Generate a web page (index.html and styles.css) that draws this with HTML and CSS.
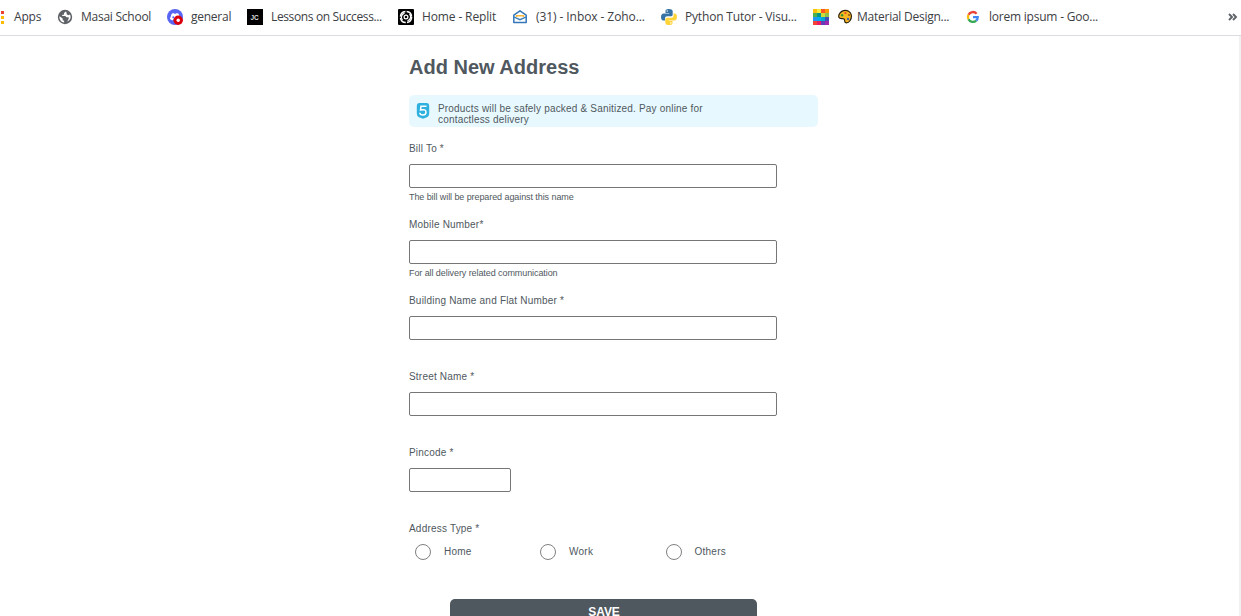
FILE: index.html
```
<!DOCTYPE html>
<html lang="en">
<head>
<meta charset="utf-8">
<title>Add New Address</title>
<link rel="stylesheet" href="styles.css">
</head>
<body>
<nav class="bookmarks">
  <a class="bm apps"><svg width="6" height="16" viewBox="0 0 6 16"><path fill="#ea4335" d="M1 2h3v3H1z"/><path fill="#fbbc04" d="M1 7h3v3H1zM1 12h3v3H1z"/></svg><span>Apps</span></a>
  <a class="bm masai"><svg width="16" height="16" viewBox="0 0 16 16"><circle cx="8" cy="8" r="7.200" fill="#5f6368"/><path fill="#fff" d="M8.500 2.600 7 4.300v1.400H5.500L5 7h3.300l1.200 1.300h2.200v1.500l-1.500 2.600C12.300 11.800 13.600 10 13.600 8c0-.9-.3-1.700-.6-2.400l-1.600.6-1.800-1V3.500zM2.500 7.200l3.200 2.400v1.600l1.400.6v1.700C4.500 13.200 2.400 11 2.400 8z"/></svg><span>Masai School</span></a>
  <a class="bm general"><svg width="16" height="16" viewBox="0 0 16 16"><circle cx="8" cy="8" r="8" fill="#5865f2"/><path fill="#fff" d="M4.700 4.800 6.600 4l.5.800h2L9.600 4l2 .8 1.700 4.700-2.600 1.800-1-1H6.600l-1.100 1.200-2.600-1.600z"/><circle cx="6.300" cy="8.300" r="1.100" fill="#5865f2"/><circle cx="11.200" cy="11.300" r="4.700" fill="#d9000d"/><circle cx="11.200" cy="11.300" r="1.700" fill="#fff"/></svg><span>general</span></a>
  <a class="bm lessons"><svg width="16" height="16" viewBox="0 0 16 16"><path d="M0 0h16v16H0z"/><text class="jc" x="3.500" y="10.500">JC</text></svg><span>Lessons on Success...</span></a>
  <a class="bm replit"><svg width="16" height="16" viewBox="0 0 16 16"><rect width="16" height="16" rx="1"/><g fill="none" stroke="#fff"><circle cx="8" cy="8" r="1.900" stroke-width="1.200"/><circle cx="8" cy="8" r="5.600" stroke-width="1.500" stroke-dasharray="7.500 1.300"/><path stroke-width="1.200" d="M4.500 11A4.200 4.200 0 0 1 6.500 4.100M11.500 5A4.200 4.200 0 0 1 9.500 11.900"/></g></svg><span>Home - Replit</span></a>
  <a class="bm zoho"><svg width="16" height="16" viewBox="0 0 16 16" fill="none"><path d="M1.800 6.200 8 1.800l6.200 4.400v7.300H1.800z" stroke="#3478b9" stroke-width="1.500" stroke-linejoin="round"/><path d="M4.500 8V6.700h7V8" stroke="#f6b73c" stroke-width="1.500"/><path d="m2 8 6 2.700L14 8" stroke="#3478b9" stroke-width="1.300"/></svg><span>(31) - Inbox - Zoho...</span></a>
  <a class="bm python"><svg width="16" height="16" viewBox="0 0 16 16"><path fill="#3773a5" d="M8 0C4.900 0 4.500 1 4.500 2.300V4h3.700v.6H2.700C1 4.600 0 6 0 8s.8 3.500 2.300 3.500H4V9.500C4 8 5 7.300 6.300 7.300H10c1 0 1.700-.8 1.700-1.800V2.300C11.700.8 10 0 8 0z"/><circle cx="6.200" cy="2" r=".7" fill="#fff"/><path fill="#ffd43b" d="M8 16c3.100 0 3.500-1 3.500-2.300V12H7.800v-.6h5.500C15 11.400 16 10 16 8s-.8-3.500-2.300-3.500H12.500v2C12.500 8 11.500 8.700 10.200 8.700H6c-1 0-1.700.8-1.700 1.800v3.200C4.300 15.200 6 16 8 16z"/><circle cx="9.900" cy="14" r=".7" fill="#fff"/></svg><span>Python Tutor - Visu...</span></a>
  <a class="bm"><svg width="16" height="16" viewBox="0 0 16 16"><path fill="#ffc107" d="M0 0h4v4H0z"/><path fill="#ffeb3b" d="M4 0h4v4H4z"/><path fill="#ff5722" d="M8 0h4v4H8z"/><path fill="#ff9800" d="M12 0h4v4h-4z"/><path fill="#4caf50" d="M0 4h4v4H0z"/><path fill="#009688" d="M4 4h4v4H4z"/><path fill="#cddc39" d="M8 4h4v4H8z"/><path fill="#8bc34a" d="M12 4h4v4h-4z"/><path fill="#2196f3" d="M0 8h4v4H0z"/><path fill="#03a9f4" d="M4 8h4v4H4z"/><path fill="#00a6d6" d="M8 8h4v4H8z"/><path fill="#3f51b5" d="M12 8h4v4h-4z"/><path fill="#f44336" d="M0 12h4v4H0z"/><path fill="#e91e63" d="M4 12h4v4H4z"/><path fill="#673ab7" d="M8 12h4v4H8z"/><path fill="#9c27b0" d="M12 12h4v4h-4z"/></svg></a>
  <a class="bm material"><svg width="15" height="16" viewBox="0 0 15 16"><path fill="#f9b81f" stroke="#2b2110" stroke-width="1.200" d="M5.500 1.700C9 .7 13 2.500 13.400 6.500c.4 4-2.400 7.500-5.200 7.400-2.400-.1-1-2.700-2-3.800-1.200-1.300-4.200.6-5.200-1.600C-.1 6 2.500 2.500 5.500 1.700z"/><circle cx="4.100" cy="6.200" r="1.200" fill="#31943b"/><circle cx="7.400" cy="4" r="1.100" fill="#e6452c"/><circle cx="11" cy="6" r="1.100" fill="#9a5b1b"/><circle cx="10" cy="10" r="1.200" fill="#3b62bd"/></svg><span>Material Design...</span></a>
  <a class="bm lorem"><svg width="16" height="16" viewBox="0 0 16 16" fill="none" stroke-width="2.300"><path stroke="#ea4335" d="M3.500 5.800A4.900 4.900 0 0 1 11.600 4.700"/><path stroke="#fbbc05" d="M3.500 5.800a4.900 4.900 0 0 0 0 4.400"/><path stroke="#34a853" d="M3.500 10.200a4.900 4.900 0 0 0 7.700 1.400"/><path stroke="#4285f4" d="M11.200 11.600A4.600 4.600 0 0 0 12.700 8.200H8"/></svg><span>lorem ipsum - Goo...</span></a>
  <svg class="more" width="10" height="8" viewBox="0 0 10 8" fill="none" stroke="#5f6368" stroke-width="1.900"><path d="m1 1 3 3-3 3M5 1l3 3-3 3"/></svg>
</nav>
<main class="page">
  <form class="address">
    <h1 class="title">Add New Address</h1>
    <div class="notice">
      <svg width="14" height="18" viewBox="0 0 14 18"><path fill="#2fb1df" d="M3.500 1h7Q13.200 1 13.200 4v7.500q0 2.700-2.200 3.700l-4 1.600-4-1.600Q.8 14.200.8 11.500V4Q.8 1 3.500 1z"/><path fill="none" stroke="#fff" stroke-width="1.500" d="M10.500 4.300H5L4.500 8q5.500-1.300 5.500 2Q10 13 7 13T3.800 10.800"/></svg>
      <p class="notice-text">Products will be safely packed &amp; Sanitized. Pay online for<br>contactless delivery</p>
    </div>
    <div class="field"><label class="label">Bill To *</label><input class="box" type="text"><small class="hint">The bill will be prepared against this name</small></div>
    <div class="field"><label class="label">Mobile Number*</label><input class="box" type="text"><small class="hint">For all delivery related communication</small></div>
    <div class="field"><label class="label">Building Name and Flat Number *</label><input class="box" type="text"></div>
    <div class="field"><label class="label">Street Name *</label><input class="box" type="text"></div>
    <div class="field"><label class="label">Pincode *</label><input class="box short" type="text"></div>
    <div class="label">Address Type *</div>
    <div class="types">
      <label class="type"><input class="radio" type="radio" name="type"><span>Home</span></label>
      <label class="type"><input class="radio" type="radio" name="type"><span>Work</span></label>
      <label class="type"><input class="radio" type="radio" name="type"><span>Others</span></label>
    </div>
    <button class="save" type="button">SAVE</button>
  </form>
</main>
</body>
</html>
```
FILE: styles.css
```
* { box-sizing: border-box; }
body { margin: 0; height: 616px; overflow: hidden; background: #fff; display: flex; flex-direction: column; }
.bookmarks {
  flex: none; height: 36px; padding-bottom: 2px; border-bottom: 1px solid #dadce0;
  display: grid; align-items: center;
  grid-template-columns: 57px 110px 80px 151px 114px 149px 152px 25px 127px 263px auto;
  font: 12px/16px "Open Sans", sans-serif; color: #3c4043;
}
.bm { display: flex; align-items: center; gap: 8px; white-space: nowrap; }
.bm svg { flex: none; }
.apps { letter-spacing: -.2px; }
.masai { letter-spacing: -.25px; }
.general { letter-spacing: -.25px; }
.lessons { letter-spacing: -.37px; }
.replit { letter-spacing: -.13px; }
.zoho { letter-spacing: -.08px; }
.python { letter-spacing: -.18px; }
.material { gap: 4px; letter-spacing: -.25px; }
.lorem { letter-spacing: -.22px; }
.jc { font: bold 6.500px "Liberation Sans", sans-serif; letter-spacing: 0; fill: #ddd; }
.page { flex: 1; min-height: 0; width: 1241px; border-right: 2px solid #f0f0f0; overflow: hidden; font-family: "Liberation Sans", Arial, sans-serif; color: #4f585e; }
.address { width: 409px; margin-left: 409px; padding-top: 19px; display: flex; flex-direction: column; }
.title { margin: 0; font-size: 20px; line-height: 24px; }
.notice { height: 32px; margin: 16px 0; padding: 7px 7px 0; display: flex; gap: 8px; border-radius: 5px; background: #e8f8ff; }
.notice svg { flex: none; }
.notice-text { margin: 1px 0 0; font-size: 10px; line-height: 11px; letter-spacing: .185px; white-space: nowrap; }
.field { height: 76px; display: flex; flex-direction: column; align-items: flex-start; }
.label { height: 12px; font-size: 10px; line-height: 12px; letter-spacing: .2px; }
.box { width: 368px; height: 24px; margin: 9px 0 0; border: 1px solid #767676; border-radius: 2px; background: #fff; }
.short { width: 102px; }
.hint { margin-top: 3px; font-size: 9px; line-height: 12px; letter-spacing: -.08px; white-space: nowrap; }
.types { display: grid; grid-template-columns: 125px 125.5px 125px; margin-top: 9px; padding-left: 6px; }
.type { display: flex; align-items: center; gap: 13px; height: 16px; font-size: 10px; line-height: 12px; letter-spacing: .25px; }
.type span { padding-bottom: 1px; }
.radio { width: 16px; height: 16px; margin: 0; appearance: none; border: 1px solid #808080; border-radius: 50%; background: #fff; }
.save { width: 307px; height: 32px; margin: 39px 0 0 41px; padding: 5px 0 0 1px; display: flex; justify-content: center; border: 0; border-radius: 5px; background: #4f585e; color: #fff; font: bold 12px/16px "Liberation Sans", Arial, sans-serif; letter-spacing: -.1px; }
```
